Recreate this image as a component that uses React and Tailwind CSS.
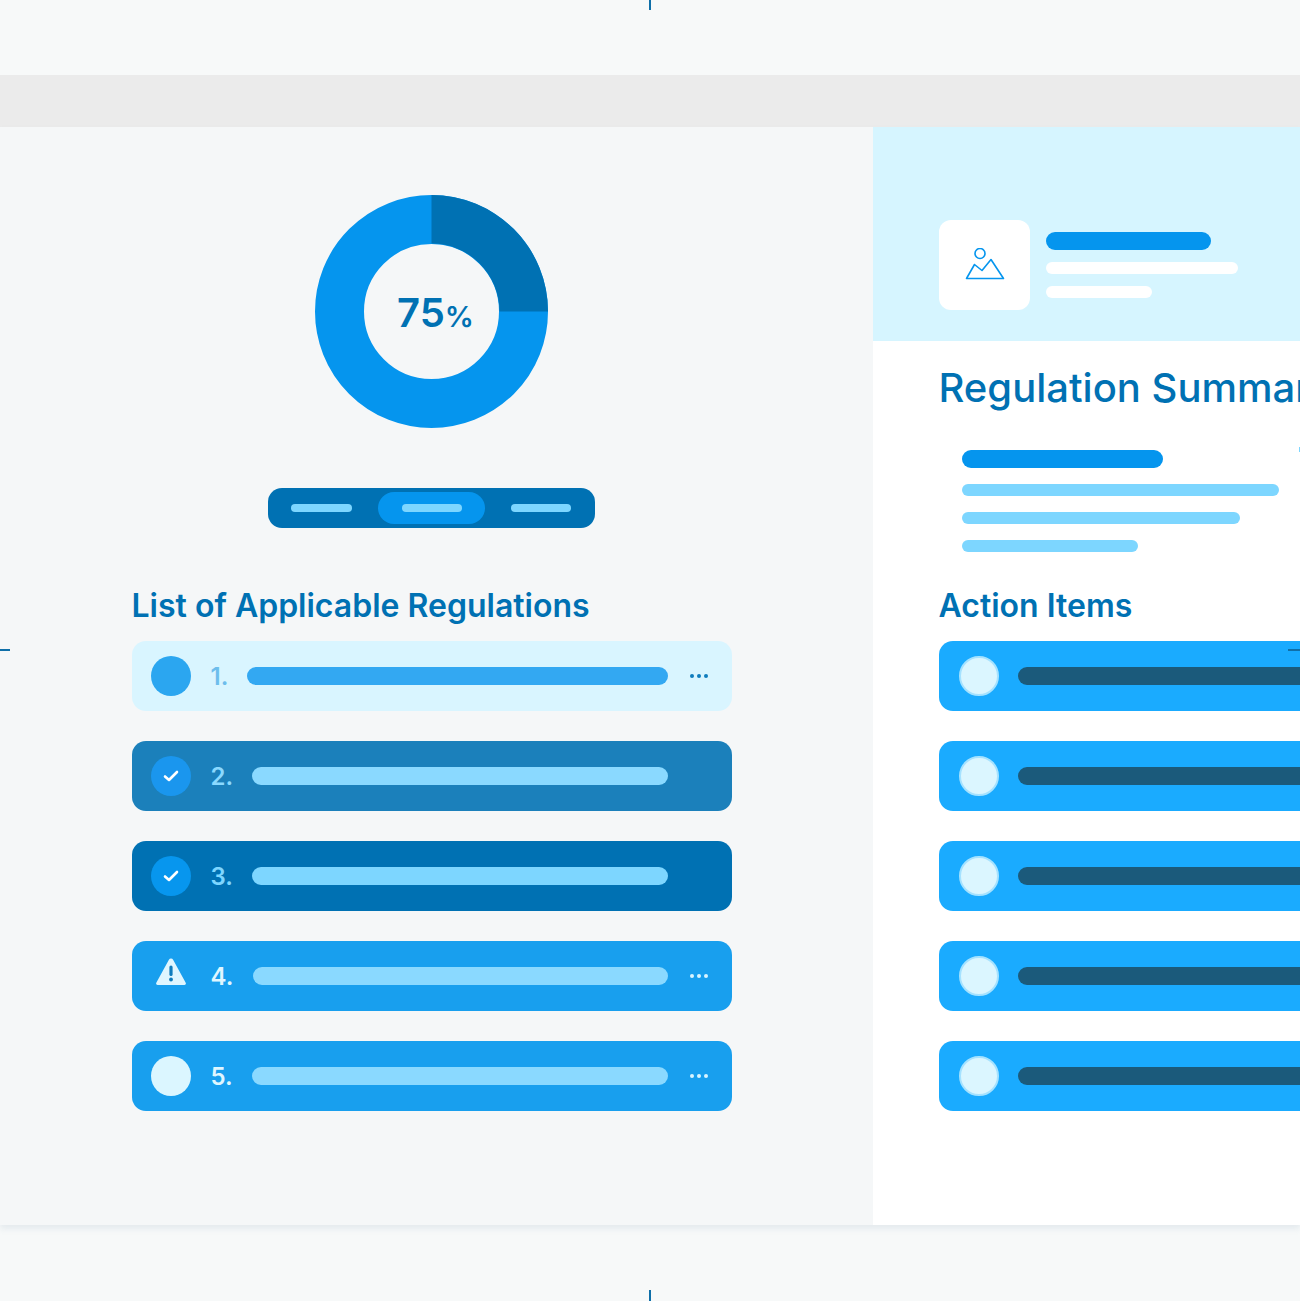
// Compliance dashboard illustration: regulations list and summary panel.
const REGULATIONS = [
  { num: "1.", row: "bg-[#d9f5ff]", numText: "text-[#6dbdec]", bar: "bg-[#33a8f2]", barLeft: "ml-[19px]", circle: "bg-[#2ba6f0]", dots: "bg-[#0f7cbd]" },
  { num: "2.", row: "bg-[#1b80bb]", numText: "text-[#8ad9ff]", bar: "bg-[#8ad9ff]", barLeft: "ml-[18.5px]", circle: "bg-[#1a96ee]", check: true },
  { num: "3.", row: "bg-[#0071b3]", numText: "text-[#7dd6ff]", bar: "bg-[#7dd6ff]", barLeft: "ml-[19px]", circle: "bg-[#0796ee]", check: true },
  { num: "4.", row: "bg-[#189fee]", numText: "text-[#dff6ff]", bar: "bg-[#8ad9ff]", barLeft: "ml-[20px]", warn: true, dots: "bg-[#d9f5ff]" },
  { num: "5.", row: "bg-[#189fee]", numText: "text-[#dff6ff]", bar: "bg-[#8ad9ff]", barLeft: "ml-[19.5px]", circle: "bg-[#dbf6ff]", dots: "bg-[#d9f5ff]" }
];

const FONT = "font-['Inter',sans-serif]";

function Donut() {
  return (
    <div className="relative mx-auto h-[233px] w-[233px]">
      <svg width="233" height="233" viewBox="0 0 233 233">
        <circle cx="116.5" cy="116.5" r="92" fill="none" stroke="#0595ee" strokeWidth="49" />
        <path d="M116.5 0A116.5 116.5 0 0 1 233 116.5H184.5A68 68 0 0 0 116.5 48.5Z" fill="#0071b3" />
      </svg>
      <div className={`absolute inset-0 flex items-center justify-center pl-[8px] pt-[2px] font-semibold leading-none text-[#0071b3] ${FONT}`}>
        <span className="text-[40px]">75</span>
        <span className="mt-[7px] text-[29px] font-semibold">%</span>
      </div>
    </div>
  );
}

function Tabs() {
  return (
    <div className="mx-auto mt-[60px] flex h-[40px] w-[327px] items-center rounded-[14px] bg-[#0071b3] pl-[23px]">
      <div className="h-[8px] w-[61px] rounded-full bg-[#7dd6ff]" />
      <div className="ml-[26px] flex h-[32px] w-[107px] items-center justify-center rounded-[16px] bg-[#0595ee]">
        <div className="h-[8px] w-[60px] rounded-full bg-[#7dd6ff]" />
      </div>
      <div className="ml-[26px] h-[8px] w-[60px] rounded-full bg-[#7dd6ff]" />
    </div>
  );
}

function Marker({ item }) {
  if (item.warn) {
    return (
      <div className="flex h-[40px] w-[40px] items-center justify-center">
        <svg className="mb-[8px]" width="32" height="28" viewBox="0 0 32 28">
          <path d="M16 0.5a2.4 2.4 0 0 1 2.1 1.2l12.6 23a1.6 1.6 0 0 1-1.4 2.4H2.7a1.6 1.6 0 0 1-1.4-2.4L13.9 1.7A2.4 2.4 0 0 1 16 0.5Z" fill="#dff6ff" />
          <rect x="14.4" y="7.5" width="3.2" height="10.5" rx="1.6" fill="#0f7cbd" />
          <circle cx="16" cy="21.5" r="1.9" fill="#0f7cbd" />
        </svg>
      </div>
    );
  }
  return (
    <div className={`flex h-[40px] w-[40px] items-center justify-center rounded-full ${item.circle}`}>
      {item.check && (
        <svg width="18" height="14" viewBox="0 0 18 14">
          <path d="M3 7.5L7 11L15 3" fill="none" stroke="#fff" strokeWidth="2.6" strokeLinecap="round" strokeLinejoin="round" />
        </svg>
      )}
    </div>
  );
}

function RegulationRow({ item }) {
  return (
    <div className={`flex h-[70px] items-center rounded-[14px] pl-[19px] ${item.row}`}>
      <Marker item={item} />
      <span className={`ml-[20px] pt-[2px] text-[24px] font-semibold ${FONT} ${item.numText}`}>{item.num}</span>
      <div className={`h-[18px] flex-1 rounded-full ${item.barLeft} ${item.bar}`} />
      <div className="ml-[22px] mr-[22px] flex w-[20px] gap-[3px]">
        {item.dots && (
          <>
            <span className={`h-[4px] w-[4px] rounded-full ${item.dots}`} />
            <span className={`h-[4px] w-[4px] rounded-full ${item.dots}`} />
            <span className={`h-[4px] w-[4px] rounded-full ${item.dots}`} />
          </>
        )}
      </div>
    </div>
  );
}

function ActionRow() {
  return (
    <div className="flex h-[70px] items-center rounded-[14px] bg-[#1aabff] pl-[20px]">
      <div className="h-[40px] w-[40px] rounded-full border-2 border-[#a5e2ff] bg-[#dbf6ff]" />
      <div className="ml-[19px] h-[18px] flex-1 rounded-l-full bg-[#1b5a7b]" />
    </div>
  );
}

export default function App() {
  return (
    <div className={`relative h-[1301px] w-[1300px] overflow-hidden bg-[#f7f9f9] ${FONT}`}>
      <div className="h-[75px]" />
      <div className="h-[52px] bg-[#ebebeb]" />

      <div className="flex h-[1098px] shadow-[0_4px_6px_rgba(120,150,180,0.14)]">
        {/* left column */}
        <div className="h-full w-[872.5px] shrink-0 bg-[#f5f7f8] pt-[68px]">
          <div className="w-[863px]">
            <Donut />
            <Tabs />
          </div>
          <div className="ml-[131.5px] mt-[57px] w-[600px]">
            <h2 className="h-[39px] whitespace-nowrap text-[32px] font-semibold leading-[42px] text-[#0071b3]">
              List of Applicable Regulations
            </h2>
            <div className="mt-[17px] flex flex-col gap-[30px]">
              {REGULATIONS.map((item) => (
                <RegulationRow key={item.num} item={item} />
              ))}
            </div>
          </div>
        </div>

        {/* right column */}
        <div className="h-full min-w-0 flex-1 overflow-hidden bg-white">
          <div className="flex h-[214px] items-start bg-[#d6f5ff] pl-[66.5px] pt-[93px]">
            <div className="flex h-[90px] w-[91px] shrink-0 items-center justify-center rounded-[12px] bg-white">
              <svg width="40" height="34" viewBox="0 0 40 34" fill="none" stroke="#0595ee" strokeWidth="1.6" strokeLinejoin="round">
                <circle cx="15" cy="5.5" r="5" />
                <path d="M1.5 30.5L9.5 16.5L17 22.5L26 11.5L38.5 30.5Z" />
              </svg>
            </div>
            <div className="ml-[16px] pt-[12px]">
              <div className="h-[18px] w-[165px] rounded-full bg-[#0595ee]" />
              <div className="mt-[12px] h-[12px] w-[192px] rounded-full bg-white" />
              <div className="mt-[12px] h-[12px] w-[106px] rounded-full bg-white" />
            </div>
          </div>

          <div className="w-[500px] pl-[66px]">
            <h1 className="mt-[22px] h-[50px] whitespace-nowrap text-[40px] font-medium leading-[50px] text-[#0071b3]">
              Regulation Summary
            </h1>
            <div className="ml-[23.5px] mt-[37px]">
              <div className="h-[18px] w-[201px] rounded-full bg-[#0595ee]" />
              <div className="mt-[16px] h-[12px] w-[317px] rounded-full bg-[#7dd6ff]" />
              <div className="mt-[16px] h-[12px] w-[278px] rounded-full bg-[#7dd6ff]" />
              <div className="mt-[16px] h-[12px] w-[176px] rounded-full bg-[#7dd6ff]" />
            </div>
            <h2 className="mt-[33px] h-[39px] text-[32px] font-semibold leading-[42px] text-[#0071b3]">
              Action Items
            </h2>
            <div className="mt-[17px] flex w-[500px] flex-col gap-[30px]">
              <ActionRow />
              <ActionRow />
              <ActionRow />
              <ActionRow />
              <ActionRow />
            </div>
          </div>
        </div>
      </div>

      {/* crop marks */}
      <div className="absolute left-[649px] top-0 h-[10px] w-[2px] bg-[#0f6fa8]" />
      <div className="absolute bottom-0 left-[649px] h-[11px] w-[2px] bg-[#0f6fa8]" />
      <div className="absolute left-0 top-[649px] h-[2px] w-[10px] bg-[#0f6fa8]" />
      <div className="absolute right-0 top-[649px] h-[2px] w-[12px] bg-[#0f6fa8]" />
      <div className="absolute right-0 top-[447px] h-[5px] w-[1px] bg-[#7dd6ff]" />
    </div>
  );
}
